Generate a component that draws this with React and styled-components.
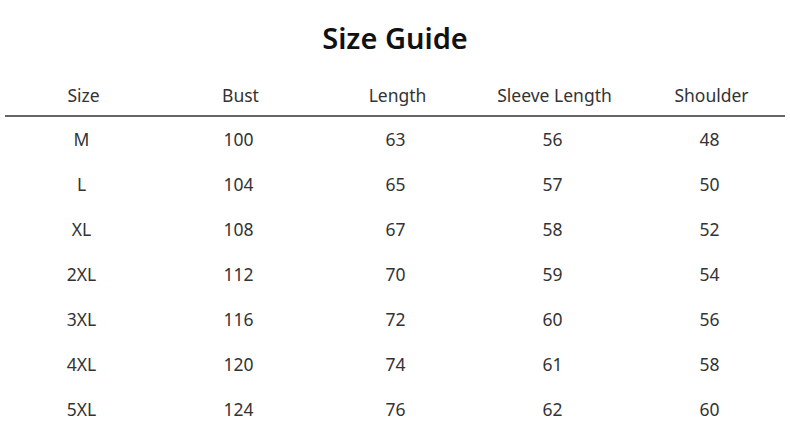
import React from 'react';
import styled, {createGlobalStyle} from 'styled-components';

const COLUMNS = ['Size', 'Bust', 'Length', 'Sleeve Length', 'Shoulder'];

const ROWS = [
  ['M', 100, 63, 56, 48],
  ['L', 104, 65, 57, 50],
  ['XL', 108, 67, 58, 52],
  ['2XL', 112, 70, 59, 54],
  ['3XL', 116, 72, 60, 56],
  ['4XL', 120, 74, 61, 58],
  ['5XL', 124, 76, 62, 60],
];

const GlobalStyle = createGlobalStyle`
  html, body {
    margin: 0;
    padding: 0;
    background: #fff;
  }
  body {
    font-family: "Noto Sans", "Open Sans", sans-serif;
    color: #333;
  }
`;

const Page = styled.div`
  width: 790px;
  height: 445px;
  overflow: hidden;
  background: #fff;
`;

const Title = styled.h1`
  margin: 0;
  height: 72px;
  display: flex;
  align-items: center;
  justify-content: center;
  padding-top: 3px;
  box-sizing: border-box;
  font-size: 29px;
  font-weight: 600;
  color: #111;
`;

const Table = styled.div`
  margin-left: 3px;
  width: 785px;
`;

const Row = styled.div`
  display: grid;
  grid-template-columns: repeat(5, 157px);
  height: 45px;
  align-items: center;
  box-sizing: border-box;
  border-bottom: ${(props) => (props.head ? '2px solid #666' : 'none')};
  margin: ${(props) => (props.head ? '0 3px 0 2px' : '0')};
  padding-top: ${(props) => (props.head ? '4px' : '0')};
`;

const Cell = styled.div`
  text-align: center;
  font-size: 17.5px;
  color: #333;
  line-height: 1;
`;

function App() {
  return (
    <Page>
      <GlobalStyle />
      <Title>Size Guide</Title>
      <Table>
        <Row head>
          {COLUMNS.map((c) => (
            <Cell key={c}>{c}</Cell>
          ))}
        </Row>
        {ROWS.map((r) => (
          <Row key={r[0]}>
            {r.map((v, i) => (
              <Cell key={i}>{v}</Cell>
            ))}
          </Row>
        ))}
      </Table>
    </Page>
  );
}

export default App;
